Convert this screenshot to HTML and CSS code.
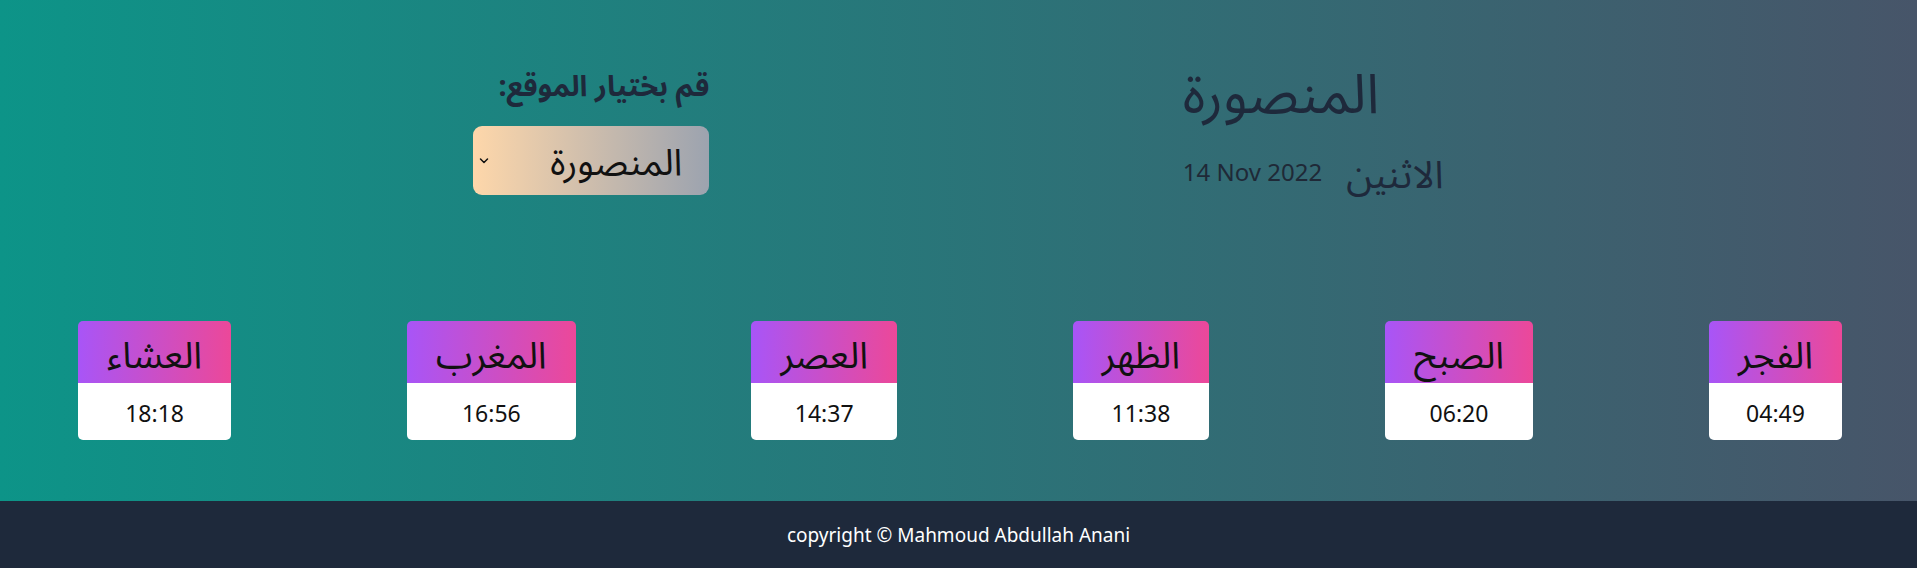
FILE: index.html
```html
<!DOCTYPE html>
<html lang="ar" dir="rtl">
<head>
<meta charset="utf-8">
<title>مواقيت الصلاة</title>
<link rel="stylesheet" href="styles.css">
</head>
<body>
<main class="main">
  <section class="top">
    <div class="city-block">
      <h1 class="city">المنصورة</h1>
      <div class="date-row">
        <span class="day">الاثنين</span>
        <span class="date" dir="ltr">14 Nov 2022</span>
      </div>
    </div>
    <div class="picker">
      <label class="picker-label" for="city">قم بختيار الموقع:</label>
      <div class="select-wrap">
        <select id="city" class="select">
          <option>المنصورة</option>
        </select>
        <svg class="chevron" width="10" height="8" viewBox="0 0 10 8"><path d="M1.5 2 L5 5.5 L8.5 2" fill="none" stroke="#111" stroke-width="1.5" stroke-linecap="round" stroke-linejoin="round"/></svg>
      </div>
    </div>
  </section>
  <section class="cards">
    <div class="card"><div class="card-head">الفجر</div><div class="card-body">04:49</div></div>
    <div class="card"><div class="card-head">الصبح</div><div class="card-body">06:20</div></div>
    <div class="card"><div class="card-head">الظهر</div><div class="card-body">11:38</div></div>
    <div class="card"><div class="card-head">العصر</div><div class="card-body">14:37</div></div>
    <div class="card"><div class="card-head">المغرب</div><div class="card-body">16:56</div></div>
    <div class="card"><div class="card-head">العشاء</div><div class="card-body">18:18</div></div>
  </section>
</main>
<footer class="footer">
  <p dir="ltr">copyright © Mahmoud Abdullah Anani</p>
</footer>
</body>
</html>
```
FILE: styles.css
```css
* { box-sizing: border-box; }
html, body { margin: 0; padding: 0; }
body {
  font-family: "Noto Sans", "Noto Sans Arabic", "DejaVu Sans", sans-serif;
  color: #1e293b;
  height: 568px;
  display: flex;
  flex-direction: column;
}
.main {
  height: 501px;
  background: linear-gradient(to right, #0d9488, #475569);
  display: flex;
  flex-direction: column;
}
.top {
  display: flex;
  justify-content: space-evenly;
  align-items: flex-start;
  padding-top: 62px;
}
.city-block {
  display: flex;
  flex-direction: column;
  align-items: flex-end;
}
.city {
  margin: 0;
  font-size: 55px;
  font-weight: 400;
  line-height: 60px;
}
.date-row {
  display: flex;
  align-items: flex-start;
  gap: 24px;
  margin-top: 29px;
}
.day { font-size: 38px; line-height: 44px; }
.date { font-size: 24px; line-height: 32px; margin-top: 5px; color: #1f2937; }
.picker {
  display: flex;
  flex-direction: column;
  align-items: flex-start;
}
.picker-label {
  font-size: 29px;
  font-weight: 700;
  line-height: 40px;
  margin-top: 3px;
}
.select-wrap {
  position: relative;
  margin-top: 21px;
}
.select {
  appearance: none;
  -webkit-appearance: none;
  display: block;
  width: 236px;
  height: 69px;
  border: none;
  border-radius: 9px;
  background: linear-gradient(to right, #fed7aa, #9ca3af);
  font-family: inherit;
  font-size: 37px;
  color: #111;
  padding: 0 27px 0 40px;
  direction: rtl;
}
.chevron {
  position: absolute;
  left: 6px;
  top: 31px;
  pointer-events: none;
}
.cards {
  display: flex;
  justify-content: space-between;
  padding: 0 75px 0 78px;
  margin-top: 126px;
}
.card {
  display: flex;
  flex-direction: column;
  border-radius: 5px;
  overflow: hidden;
}
.card-head {
  background: linear-gradient(to right, #a855f7, #ec4899);
  font-size: 37px;
  line-height: 44px;
  padding: 11px 29px 7px;
  text-align: center;
  color: #111;
}
.card-body {
  background: #fff;
  font-size: 23px;
  line-height: 32px;
  padding: 14px 0 11px;
  text-align: center;
  color: #111;
}
.footer {
  height: 67px;
  background: #1e293b;
  color: #fff;
  display: flex;
  align-items: center;
  justify-content: center;
}
.footer p {
  margin: 0;
  font-size: 19px;
  line-height: 26px;
}
```
